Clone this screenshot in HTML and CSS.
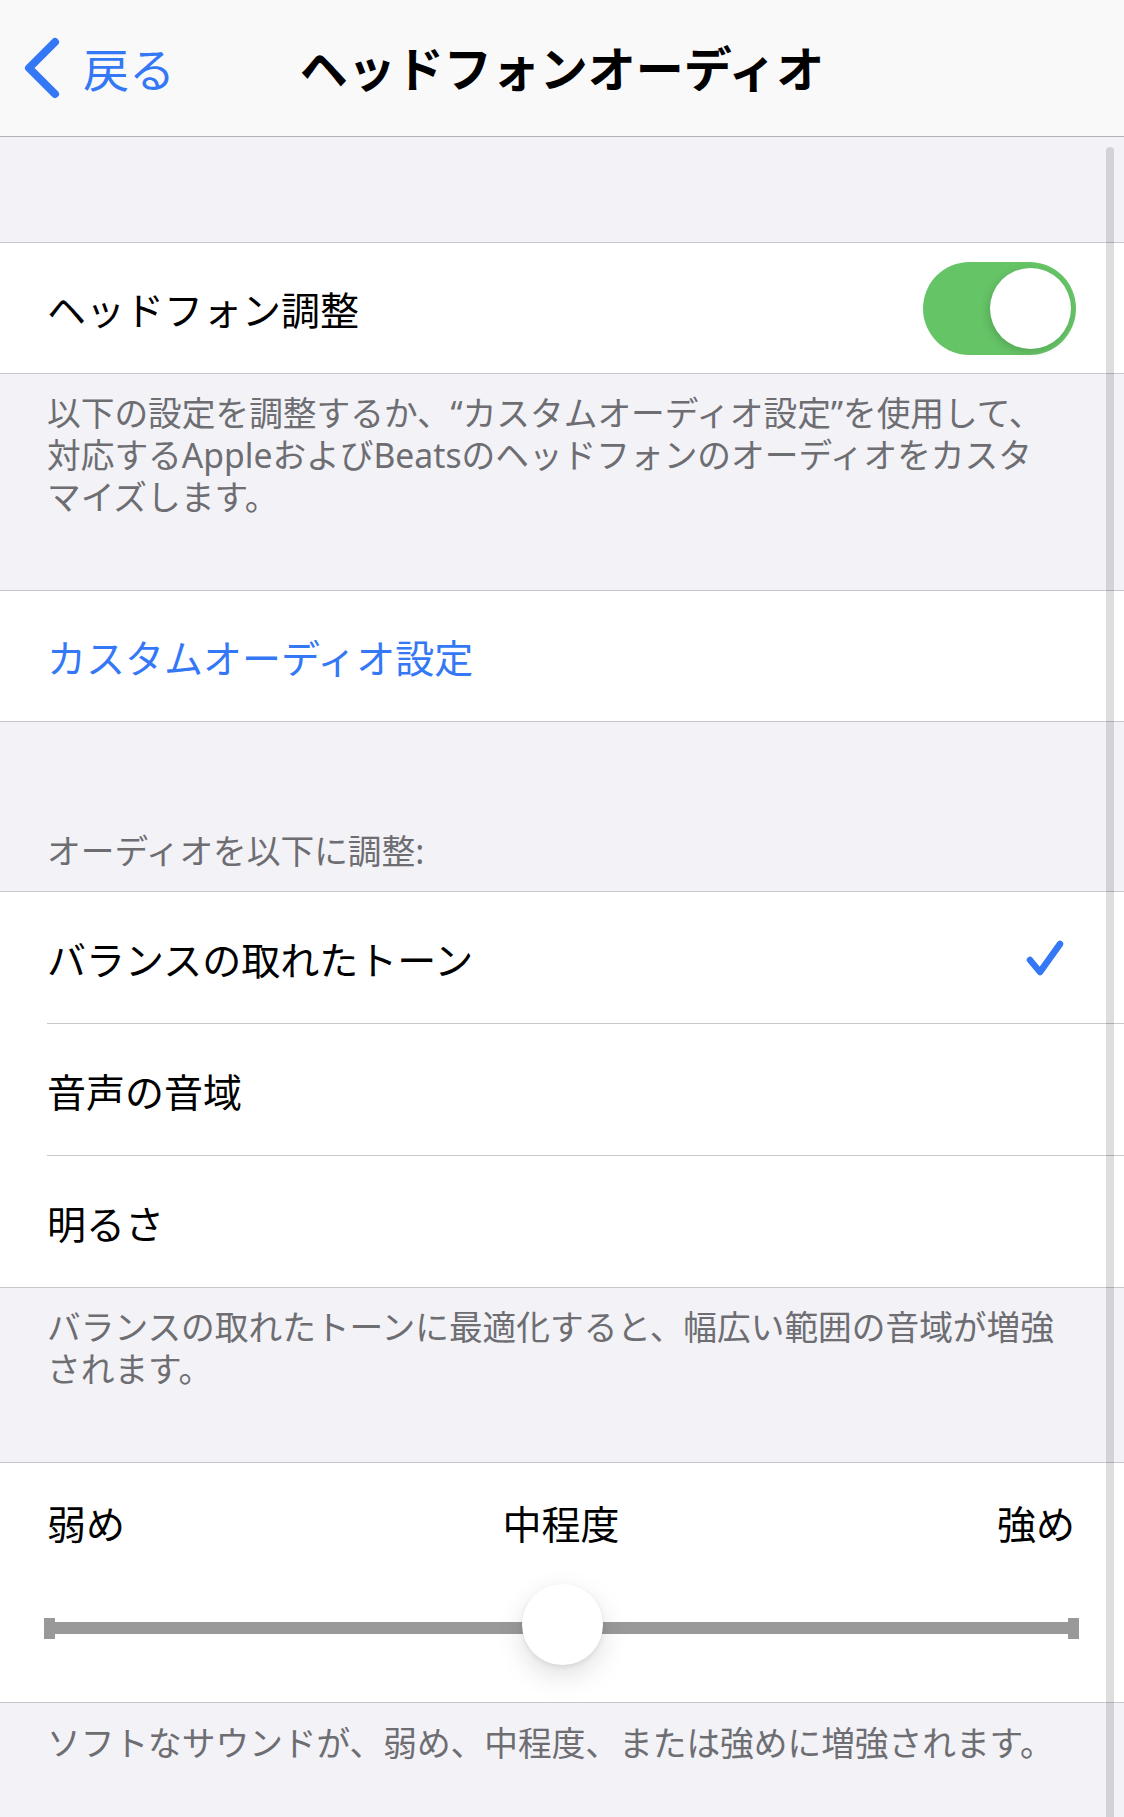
FILE: index.html
```html
<!DOCTYPE html>
<html lang="ja">
  <head>
    <meta charset="UTF-8" />
    <meta name="viewport" content="width=device-width, initial-scale=1.0" />
    <title>ヘッドフォンオーディオ</title>
    <link rel="stylesheet" href="styles.css">
  </head>
  <body>
    <div class="screen">
      <!-- ナビゲーションバー -->
      <header class="navbar">
        <a class="back" href="#">
          <svg class="back-icon" width="40" height="62" viewBox="0 0 40 62">
            <path d="M33 5 L7 31 L33 57" fill="none" stroke="#3478f6" stroke-width="8" stroke-linecap="round" stroke-linejoin="round" />
          </svg>
          <span>戻る</span>
        </a>
        <h1 class="title">ヘッドフォンオーディオ</h1>
        <span></span>
      </header>

      <main class="content">
        <div class="spacer"></div>

        <section class="group">
          <div class="row">
            <span class="label">ヘッドフォン調整</span>
            <span class="toggle on"><span class="knob"></span></span>
          </div>
        </section>
        <p class="footnote">
          以下の設定を調整するか、“カスタムオーディオ設定”を使用して、<br>
          対応するAppleおよびBeatsのヘッドフォンのオーディオをカスタ<br>
          マイズします。
        </p>

        <section class="group">
          <a class="row link" href="#">カスタムオーディオ設定</a>
        </section>

        <p class="group-header">オーディオを以下に調整:</p>
        <section class="group list">
          <div class="row tall">
            <span class="label">バランスの取れたトーン</span>
            <svg class="check" width="44" height="40" viewBox="0 0 44 40">
              <path d="M6 22 L16 34 L36 6" fill="none" stroke="#3478f6" stroke-width="6.5" stroke-linecap="round" stroke-linejoin="round" />
            </svg>
          </div>
          <div class="row tall">
            <span class="label">音声の音域</span>
          </div>
          <div class="row tall">
            <span class="label">明るさ</span>
          </div>
        </section>
        <p class="footnote">
          バランスの取れたトーンに最適化すると、幅広い範囲の音域が増強<br>
          されます。
        </p>

        <section class="group slider-cell">
          <div class="slider-labels">
            <span>弱め</span>
            <span>中程度</span>
            <span>強め</span>
          </div>
          <div class="slider">
            <span class="cap"></span>
            <span class="bar"></span>
            <span class="cap"></span>
            <span class="thumb"></span>
          </div>
        </section>
        <p class="footnote last">ソフトなサウンドが、弱め、中程度、または強めに増強されます。</p>
      </main>

      <div class="scroll-indicator"></div>
    </div>
  </body>
</html>
```

FILE: styles.css
```css
body {
  margin: 0;
  background-color: #f2f2f7;
  font-family: "Noto Sans", "Noto Sans CJK JP", sans-serif;
  color: #000;
}
.screen {
  position: relative;
  min-height: 1817px;
  overflow: hidden;
}
.navbar {
  height: 136px;
  background-color: #f9f9fa;
  border-bottom: 1px solid #b4b4b8;
  display: grid;
  grid-template-columns: 1fr auto 1fr;
  align-items: center;
}
.back {
  display: flex;
  align-items: center;
  padding-left: 22px;
  color: #3478f6;
  text-decoration: none;
  font-size: 46px;
}
.back span {
  margin-left: 21px;
  margin-top: -2px;
}
.title {
  margin: 0;
  font-size: 48px;
  font-weight: 700;
  margin-top: -4px;
}
.spacer {
  height: 105px;
}
.group {
  background-color: #fff;
  border-top: 1px solid #c8c7cc;
  border-bottom: 1px solid #c8c7cc;
}
.row {
  height: 130px;
  display: flex;
  align-items: center;
  justify-content: space-between;
  padding: 0 48px 0 47px;
  font-size: 39px;
}
.row.tall {
  height: 131px;
}
.list .row + .row {
  border-top: 1px solid #c8c7cc;
  margin-left: 47px;
  padding-left: 0;
}
.link {
  color: #3478f6;
  text-decoration: none;
}
.toggle {
  width: 153px;
  height: 93px;
  border-radius: 47px;
  background-color: #e9e9eb;
  display: flex;
  align-items: center;
  padding: 0 5px;
  box-sizing: border-box;
}
.toggle.on {
  background-color: #65c466;
  justify-content: flex-end;
}
.knob {
  width: 81px;
  height: 81px;
  border-radius: 50%;
  background-color: #fff;
  box-shadow: -2px 3px 8px rgba(0, 0, 0, 0.15);
}
.check {
  margin-right: 8px;
}
.footnote {
  margin: 0;
  padding: 18px 47px 72px;
  font-size: 33.7px;
  line-height: 42px;
  color: #6d6d72;
}
.footnote.last {
  padding-top: 19px;
}
.group-header {
  margin: 0;
  padding: 108px 47px 19px;
  font-size: 33.7px;
  line-height: 42px;
  color: #6d6d72;
}
.slider-cell {
  padding: 37px 0 37px;
}
.slider-labels {
  display: flex;
  justify-content: space-between;
  padding: 0 49px 0 47px;
  font-size: 39px;
  line-height: 48px;
}
.slider {
  position: relative;
  box-sizing: border-box;
  height: 81px;
  margin-top: 36px;
  padding: 7px 45px 0 44px;
  display: flex;
  align-items: center;
}
.cap {
  width: 11px;
  height: 21px;
  background-color: #999;
}
.bar {
  flex: 1;
  height: 12px;
  background-color: #999;
}
.thumb {
  position: absolute;
  top: 0;
  left: calc(50% - 40px);
  width: 81px;
  height: 81px;
  border-radius: 50%;
  background-color: #fff;
  box-shadow: 0 10px 28px rgba(0, 0, 0, 0.13), 0 2px 5px rgba(0, 0, 0, 0.08);
}
.scroll-indicator {
  position: absolute;
  top: 147px;
  bottom: 0;
  right: 10px;
  width: 8px;
  border-radius: 4px 4px 0 0;
  background-color: rgba(0, 0, 0, 0.13);
}
```
